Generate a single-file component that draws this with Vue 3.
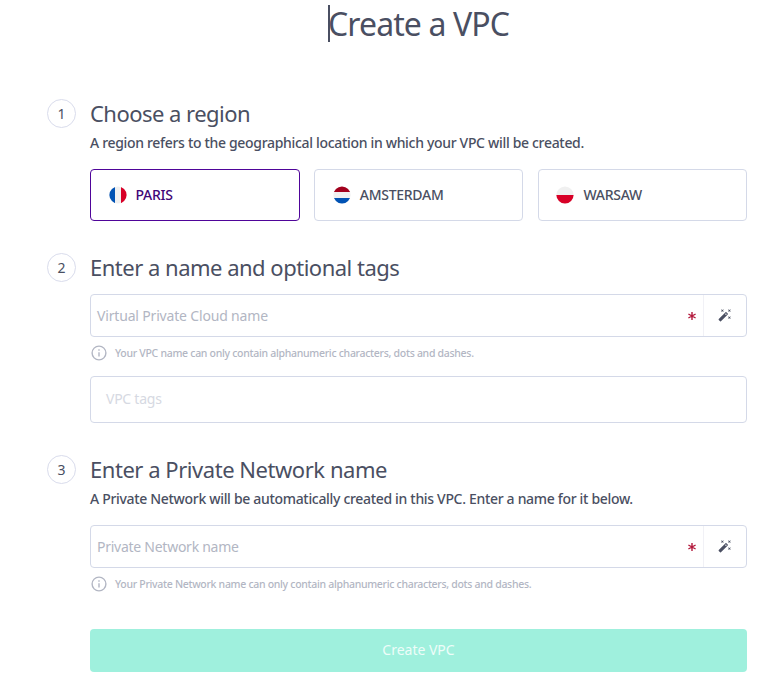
<script setup>
const regions = [
  { name: 'PARIS', flag: 'fr', selected: true },
  { name: 'AMSTERDAM', flag: 'nl', selected: false },
  { name: 'WARSAW', flag: 'pl', selected: false },
]
</script>

<template>
  <main class="page">
    <h1 class="title"><span class="caret"></span><span class="title-text">Create a VPC</span></h1>

    <section class="step region-step">
      <div class="number">1</div>
      <div class="content">
        <h2 class="heading h-region">Choose a region</h2>
        <p class="description">A region refers to the geographical location in which your VPC will be created.</p>
        <div class="regions">
          <button v-for="r in regions" :key="r.name" type="button" class="region" :class="{ selected: r.selected }">
            <svg class="flag" viewBox="0 0 18 18">
              <defs><clipPath :id="'clip-' + r.flag"><circle cx="9" cy="9" r="8.6" /></clipPath></defs>
              <g :clip-path="`url(#clip-${r.flag})`">
                <rect width="18" height="18" fill="#f0f0f0" />
                <template v-if="r.flag === 'fr'">
                  <rect width="6" height="18" fill="#0052b4" />
                  <rect x="12" width="6" height="18" fill="#d80027" />
                </template>
                <template v-else-if="r.flag === 'nl'">
                  <rect width="18" height="6" fill="#a2001d" />
                  <rect y="12" width="18" height="6" fill="#0052b4" />
                </template>
                <rect v-else y="9" width="18" height="9" fill="#d80027" />
              </g>
            </svg>
            <span class="region-name">{{ r.name }}</span>
          </button>
        </div>
      </div>
    </section>

    <section class="step name-step">
      <div class="number">2</div>
      <div class="content">
        <h2 class="heading h-name">Enter a name and optional tags</h2>
        <div class="field">
          <span class="placeholder">Virtual Private Cloud name</span>
          <span class="required"><svg viewBox="0 0 10 10"><path d="M5 1v8M1.4 3l7.2 4M8.6 3L1.4 7" /></svg></span>
          <button type="button" class="wand" aria-label="Generate name">
            <svg viewBox="0 0 24 24"><path d="M7.5 5.6 10 7 8.6 4.5 10 2 7.5 3.4 5 2l1.4 2.5L5 7zm12 9.8L17 14l1.4 2.5L17 19l2.500-1.400L22 19l-1.400-2.500L22 14zM22 2l-2.500 1.400L17 2l1.400 2.500L17 7l2.500-1.400L22 7l-1.400-2.500z" /><path d="M12.960 7.290c.39-.39 1.020-.39 1.410 0l2.340 2.340c.39.39.39 1.020 0 1.410L5.040 22.710c-.39.39-1.020.39-1.410 0l-2.340-2.340c-.39-.39-.39-1.020 0-1.410zM12.200 10.600l1.400 1.400 1.400-1.400-1.400-1.400z" fill-rule="evenodd" /></svg>
          </button>
        </div>
        <div class="hint">
          <svg viewBox="0 0 16 16"><circle cx="8" cy="8" r="6.9" /><path d="M8 7.200v4.200M8 4.300v1.400" /></svg>
          <span>Your VPC name can only contain alphanumeric characters, dots and dashes.</span>
        </div>
        <div class="tags"><span>VPC tags</span></div>
      </div>
    </section>

    <section class="step network-step">
      <div class="number">3</div>
      <div class="content">
        <h2 class="heading h-network">Enter a Private Network name</h2>
        <p class="description">A Private Network will be automatically created in this VPC. Enter a name for it below.</p>
        <div class="field">
          <span class="placeholder p-network">Private Network name</span>
          <span class="required"><svg viewBox="0 0 10 10"><path d="M5 1v8M1.4 3l7.2 4M8.6 3L1.4 7" /></svg></span>
          <button type="button" class="wand" aria-label="Generate name">
            <svg viewBox="0 0 24 24"><path d="M7.5 5.6 10 7 8.6 4.5 10 2 7.5 3.4 5 2l1.4 2.5L5 7zm12 9.8L17 14l1.4 2.5L17 19l2.500-1.400L22 19l-1.400-2.500L22 14zM22 2l-2.500 1.400L17 2l1.400 2.500L17 7l2.500-1.400L22 7l-1.400-2.500z" /><path d="M12.960 7.290c.39-.39 1.020-.39 1.410 0l2.340 2.340c.39.39.39 1.020 0 1.410L5.040 22.710c-.39.39-1.020.39-1.410 0l-2.340-2.340c-.39-.39-.39-1.020 0-1.410zM12.200 10.600l1.400 1.400 1.400-1.400-1.400-1.400z" fill-rule="evenodd" /></svg>
          </button>
        </div>
        <div class="hint hint-network">
          <svg viewBox="0 0 16 16"><circle cx="8" cy="8" r="6.9" /><path d="M8 7.200v4.200M8 4.300v1.400" /></svg>
          <span>Your Private Network name can only contain alphanumeric characters, dots and dashes.</span>
        </div>
      </div>
    </section>

    <button type="button" class="submit">Create VPC</button>
  </main>
</template>

<style>
body {
  background: #fff;
}
</style>

<style scoped>
* {
  box-sizing: border-box;
}

.page {
  width: 780px;
  height: 684px;
  padding: 0 33px 0 47px;
  overflow: hidden;
  font-family: "Noto Sans", sans-serif;
  color: #4a4f62;
  white-space: nowrap;
}

button {
  margin: 0;
  padding: 0;
  font: inherit;
  color: inherit;
  background: none;
  border: 0;
}

.title {
  display: flex;
  align-items: center;
  height: 46px;
  margin: 0 0 0 281px;
  font-size: 32px;
  font-weight: 400;
  line-height: 46px;
  letter-spacing: -0.9px;
}

.title-text {
  padding-top: 1px;
}

.caret {
  width: 2px;
  height: 37px;
  margin-right: -2px;
  background: #4a4f62;
}

.step {
  display: flex;
  gap: 14px;
}

.region-step {
  height: 154px;
  margin-top: 53px;
}

.name-step {
  height: 202px;
}

.network-step {
  height: 174px;
}

.number {
  display: flex;
  align-items: center;
  justify-content: center;
  width: 29px;
  height: 29px;
  padding-bottom: 1px;
  border: 1px solid #d9dcec;
  border-radius: 50%;
  font-size: 14px;
}

.content {
  width: 657px;
}

.heading {
  margin: 0;
  height: 30px;
  font-size: 22px;
  font-weight: 400;
  line-height: 28px;
}

.h-region {
  letter-spacing: -0.53px;
}

.h-name {
  letter-spacing: -0.5px;
}

.h-network {
  letter-spacing: -0.46px;
}

.description {
  margin: 0;
  height: 28px;
  font-size: 14px;
  font-weight: 500;
  line-height: 28px;
  letter-spacing: -0.32px;
}

.regions {
  display: grid;
  grid-template-columns: 209.6px 209px 209px;
  column-gap: 14.7px;
  margin-top: 12px;
}

.region {
  display: flex;
  align-items: center;
  gap: 9px;
  height: 52px;
  padding: 0 0 1px 17.5px;
  border: 1px solid #d4d9e8;
  border-radius: 4px;
  font-size: 14px;
  font-weight: 500;
  letter-spacing: -0.28px;
}

.region.selected {
  border-color: #4f0599;
  color: #3f0678;
}

.flag {
  width: 18px;
  height: 18px;
}

.field {
  display: flex;
  align-items: center;
  height: 43px;
  border: 1px solid #d4d9e8;
  border-radius: 4px;
}

.name-step .field {
  margin-top: 11px;
}

.network-step .field {
  margin-top: 12px;
}

.placeholder {
  flex: 1;
  padding-left: 6px;
  font-size: 14px;
  color: #b2b6c3;
  letter-spacing: -0.17px;
}

.p-network {
  letter-spacing: -0.26px;
}

.required {
  display: flex;
  width: 10px;
  margin-right: 6.5px;
}

.required svg {
  width: 10px;
  height: 10px;
  fill: none;
  stroke: #b3193c;
  stroke-width: 1.4;
}

.wand {
  display: flex;
  align-items: center;
  justify-content: center;
  width: 43px;
  height: 41px;
  padding-bottom: 1px;
  border-left: 1px solid #f1f1f6;
}

.wand svg {
  width: 14px;
  height: 14px;
  fill: #4a4f62;
}

.hint {
  display: flex;
  align-items: center;
  gap: 8px;
  height: 32px;
  padding-left: 1px;
  font-size: 10.5px;
  font-weight: 500;
  color: #b2b6c3;
  letter-spacing: -0.29px;
}

.hint-network {
  letter-spacing: -0.3px;
}

.hint svg {
  width: 16px;
  height: 16px;
  fill: none;
  stroke: #b2b6c3;
  stroke-width: 1.4;
}

.tags {
  display: flex;
  align-items: center;
  height: 47px;
  margin-top: 7px;
  padding: 0 0 2px 15px;
  border: 1px solid #d4d9e8;
  border-radius: 4px;
  font-size: 14px;
  color: #d6d9e2;
  letter-spacing: -0.25px;
}

.submit {
  display: block;
  width: 657px;
  height: 43px;
  margin-left: 43px;
  padding-bottom: 2px;
  border-radius: 4px;
  background: #9ff0dd;
  color: #eefdf9;
  font-size: 14px;
  text-align: center;
}
</style>
